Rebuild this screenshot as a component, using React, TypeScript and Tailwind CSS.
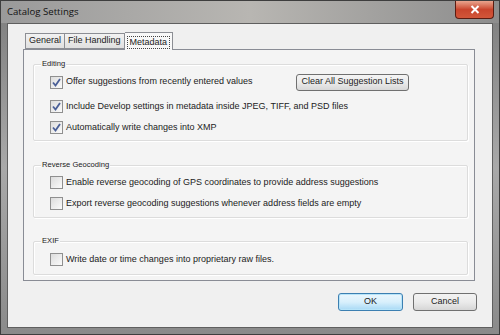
import React from "react";

const font = { fontFamily: '"Liberation Sans", Arial, sans-serif' };

function Check({ checked }: { checked: boolean }) {
  return (
    <span className="w-[13px] h-[13px] border border-[#8f8f8f] bg-gradient-to-br from-[#dcdcdc] to-[#fbfbfb] flex items-center justify-center shrink-0">
      {checked && (
        <svg width="11" height="11" viewBox="0 0 11 11">
          <path d="M2 5.5 L4.5 8.5 L9 2" fill="none" stroke="#4a5f97" strokeWidth="1.8" />
        </svg>
      )}
    </span>
  );
}

function Row({ checked, children }: { checked: boolean; children: React.ReactNode }) {
  return (
    <div className="flex items-center gap-[3px] h-[13px] text-[9px] text-[#222] whitespace-nowrap">
      <Check checked={checked} />
      <span>{children}</span>
    </div>
  );
}

function Group({ label, children, cls }: { label: string; children: React.ReactNode; cls: string }) {
  return (
    <div className={"relative border border-[#dcdcdc] rounded-[2px] shadow-[inset_1px_1px_0_#ffffff,1px_1px_0_#ffffff] " + cls}>
      <span className="absolute left-[7px] top-[-6px] bg-[#f4f4f4] px-[1px] text-[7.6px] leading-[10px] text-[#222]">{label}</span>
      {children}
    </div>
  );
}

export default function App() {
  return (
    <div style={font} className="w-[500px] h-[335px] flex flex-col bg-gradient-to-b from-[#7d7d7d] via-[#a9a9a9] to-[#8a8a8a] border border-[#3e3e3e]">
      <div className="h-[22px] flex items-start justify-between bg-gradient-to-r from-[#9a9a9a] via-[#b8b6b2] to-[#8d8d8d]">
        <span className="ml-[6px] mt-[4px] text-[9.6px] text-[#111] leading-[14px]" style={{ fontFamily: '"Open Sans", "Liberation Sans", sans-serif' }}>Catalog Settings</span>
        <div className="mr-[5px] w-[39px] h-[18px] rounded-b-[4px] border border-[#5a1c12] border-t-0 bg-gradient-to-b from-[#e8a48e] via-[#c9452d] to-[#d2563a] flex items-center justify-center">
          <svg width="10" height="9" viewBox="0 0 10 9">
            <path d="M1.5 1 L8.5 8 M8.5 1 L1.5 8" stroke="#ffffff" strokeWidth="2" />
          </svg>
        </div>
      </div>
      <div className="flex-1 mx-[6px] mb-[6px] bg-[#f0f0f0] border border-[#5f5f5f] flex flex-col">
        <div className="ml-[15px] mt-[7px] flex items-end text-[9px] text-[#222]">
          <div className="h-[16px] px-[3px] border border-[#8c8e94] border-r-0 bg-gradient-to-b from-[#f2f2f2] to-[#e0e0e0] flex items-center ml-[2px]">General</div>
          <div className="h-[16px] px-[3px] border border-[#8c8e94] bg-gradient-to-b from-[#f2f2f2] to-[#e0e0e0] flex items-center">File Handling</div>
          <div className="h-[18px] px-[2px] pt-[1px] border border-[#8c8e94] border-b-0 border-l-0 bg-[#f8f8f8] flex items-center relative top-[1px] z-10">
            <span className="border border-dotted border-[#444] px-[2px] leading-[11px]">Metadata</span>
          </div>
        </div>
        <div className="ml-[15px] w-[452px] h-[232px] border border-[#898c95] bg-[#f4f4f4] pt-[14px] pl-[9px] pr-[6px] flex flex-col">
          <Group label="Editing" cls="h-[77px] pl-[16px] pt-[8px]">
            <div className="flex items-center h-[18px]">
              <div className="w-[246px]"><Row checked>Offer suggestions from recently entered values</Row></div>
              <div className="w-[113px] h-[17px] border border-[#707070] rounded-[3px] bg-gradient-to-b from-[#f4f4f4] via-[#ebebeb] to-[#d8d8d8] flex items-center justify-center text-[9px] text-[#222]">Clear All Suggestion Lists</div>
            </div>
            <div className="mt-[9px]"><Row checked>Include Develop settings in metadata inside JPEG, TIFF, and PSD files</Row></div>
            <div className="mt-[8px]"><Row checked>Automatically write changes into XMP</Row></div>
          </Group>
          <Group label="Reverse Geocoding" cls="mt-[24px] h-[53px] pl-[16px] pt-[10px]">
            <Row checked={false}>Enable reverse geocoding of GPS coordinates to provide address suggestions</Row>
            <div className="mt-[8px]"><Row checked={false}>Export reverse geocoding suggestions whenever address fields are empty</Row></div>
          </Group>
          <Group label="EXIF" cls="mt-[23px] h-[34px] pl-[16px] pt-[11px]">
            <Row checked={false}>Write date or time changes into proprietary raw files.</Row>
          </Group>
        </div>
        <div className="flex justify-end gap-[10px] mr-[15px] mt-[12px] text-[9px] text-[#222]">
          <div className="w-[65px] h-[18px] border border-[#3c7fb1] rounded-[3px] bg-gradient-to-b from-[#eaf6fd] via-[#d9f0fc] to-[#a7d9f5] shadow-[inset_0_0_0_1px_#b7e4f9] flex items-center justify-center">OK</div>
          <div className="w-[64px] h-[18px] border border-[#707070] rounded-[3px] bg-gradient-to-b from-[#f2f2f2] via-[#ebebeb] to-[#d6d6d6] flex items-center justify-center">Cancel</div>
        </div>
      </div>
    </div>
  );
}
